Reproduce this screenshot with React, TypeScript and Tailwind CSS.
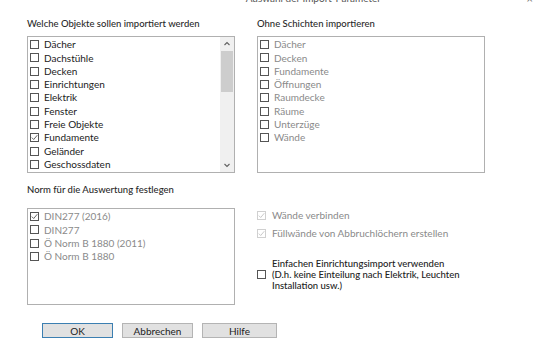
import React from "react";

const objekte = [
  { label: "Dächer", checked: false },
  { label: "Dachstühle", checked: false },
  { label: "Decken", checked: false },
  { label: "Einrichtungen", checked: false },
  { label: "Elektrik", checked: false },
  { label: "Fenster", checked: false },
  { label: "Freie Objekte", checked: false },
  { label: "Fundamente", checked: true },
  { label: "Geländer", checked: false },
  { label: "Geschossdaten", checked: false },
];

const schichten = ["Dächer", "Decken", "Fundamente", "Öffnungen", "Raumdecke", "Räume", "Unterzüge", "Wände"];

const normen = [
  { label: "DIN277 (2016)", checked: true },
  { label: "DIN277", checked: false },
  { label: "Ö Norm B 1880 (2011)", checked: false },
  { label: "Ö Norm B 1880", checked: false },
];

function Box({ checked, light }: { checked?: boolean; light?: boolean }) {
  return (
    <span
      className={
        "w-[9px] h-[9px] shrink-0 border flex items-center justify-center bg-white " +
        (light ? "border-[#d0d0d0]" : "border-[#555]")
      }
    >
      {checked && (
        <svg width="7" height="7" viewBox="0 0 7 7">
          <path d="M0.8 3.6 L2.7 5.5 L6.3 1.2" fill="none" stroke={light ? "#c4c4c4" : "#555"} strokeWidth="0.9" />
        </svg>
      )}
    </span>
  );
}

function Row({ label, checked, muted }: { label: string; checked?: boolean; muted?: boolean }) {
  return (
    <div className="h-[13.33px] flex items-center gap-[5px]">
      <Box checked={checked} />
      <span className={muted ? "text-[#8a8a8a]" : "text-[#222]"}>{label}</span>
    </div>
  );
}

function Heading({ children }: { children: React.ReactNode }) {
  return <div className="text-[9.5px] leading-[12px] font-medium text-[#2a2a2a]">{children}</div>;
}

function Btn({ label, primary, w }: { label: string; primary?: boolean; w: string }) {
  return (
    <button
      className={
        "h-[15px] bg-[#e1e1e1] border text-[10px] leading-none text-[#222] " +
        w +
        (primary ? " border-[#3c7fb1]" : " border-[#b4b4b4]")
      }
    >
      {label}
    </button>
  );
}

export default function App() {
  return (
    <div
      className="w-[542px] h-[340px] bg-white overflow-hidden text-[10px]"
      style={{ fontFamily: 'Lato, "Noto Sans", sans-serif' }}
    >
      {/* title, cut at the top edge */}
      <div className="h-[6px] flex justify-between overflow-hidden">
        <div className="w-[40px]" />
        <div className="-mt-[8px] text-[10px] leading-[12px] text-[#555] pl-[60px]">Auswahl der Import-Parameter</div>
        <div className="-mt-[7px] pr-[9px] text-[11px] leading-[12px] text-[#777]">×</div>
      </div>

      <div className="pl-[27px] pt-[12px] flex gap-[22px]">
        <div className="w-[208px] flex flex-col gap-[6px]">
          <Heading>Welche Objekte sollen importiert werden</Heading>
          <div className="h-[137px] border border-[#b0b0b0] flex">
            <div className="flex-1 pl-[2px] pt-[1px]">
              {objekte.map((o) => (
                <Row key={o.label} label={o.label} checked={o.checked} />
              ))}
            </div>
            <div className="w-[14px] bg-[#f0f0f0] flex flex-col items-center">
              <svg width="14" height="14" viewBox="0 0 14 14">
                <path d="M4.5 8 L7 5.5 L9.5 8" fill="none" stroke="#606060" strokeWidth="1.1" />
              </svg>
              <div className="w-[12px] h-[41px] bg-[#cdcdcd]" />
              <div className="flex-1" />
              <svg width="14" height="14" viewBox="0 0 14 14">
                <path d="M4.5 6 L7 8.5 L9.5 6" fill="none" stroke="#606060" strokeWidth="1.1" />
              </svg>
            </div>
          </div>
        </div>
        <div className="w-[228px] flex flex-col gap-[6px]">
          <Heading>Ohne Schichten importieren</Heading>
          <div className="h-[137px] border border-[#b0b0b0] pl-[2px] pt-[1px]">
            {schichten.map((s) => (
              <Row key={s} label={s} muted />
            ))}
          </div>
        </div>
      </div>

      <div className="pl-[27px] pt-[11px] flex gap-[22px]">
        <div className="w-[208px] flex flex-col gap-[12px]">
          <Heading>Norm für die Auswertung festlegen</Heading>
          <div className="h-[97px] border border-[#b0b0b0] pl-[2px] pt-[1px]">
            {normen.map((n) => (
              <Row key={n.label} label={n.label} checked={n.checked} muted />
            ))}
          </div>
        </div>
        <div className="flex flex-col pt-[22px]">
          <div className="h-[18px] flex items-center gap-[6px] text-[#8a8a8a]">
            <Box checked light />
            <span>Wände verbinden</span>
          </div>
          <div className="h-[18px] flex items-center gap-[6px] text-[#8a8a8a]">
            <Box checked light />
            <span>Füllwände von Abbruchlöchern erstellen</span>
          </div>
          <div className="mt-[16px] flex items-center gap-[6px] text-[#222]">
            <Box />
            <div className="text-[9.5px] leading-[11px] font-medium">
              Einfachen Einrichtungsimport verwenden
              <br />
              (D.h. keine Einteilung nach Elektrik, Leuchten
              <br />
              Installation usw.)
            </div>
          </div>
        </div>
      </div>

      <div className="pl-[42px] pt-[18px] flex gap-[9px]">
        <Btn label="OK" primary w="w-[71px]" />
        <Btn label="Abbrechen" w="w-[71px]" />
        <Btn label="Hilfe" w="w-[75px]" />
      </div>
    </div>
  );
}
